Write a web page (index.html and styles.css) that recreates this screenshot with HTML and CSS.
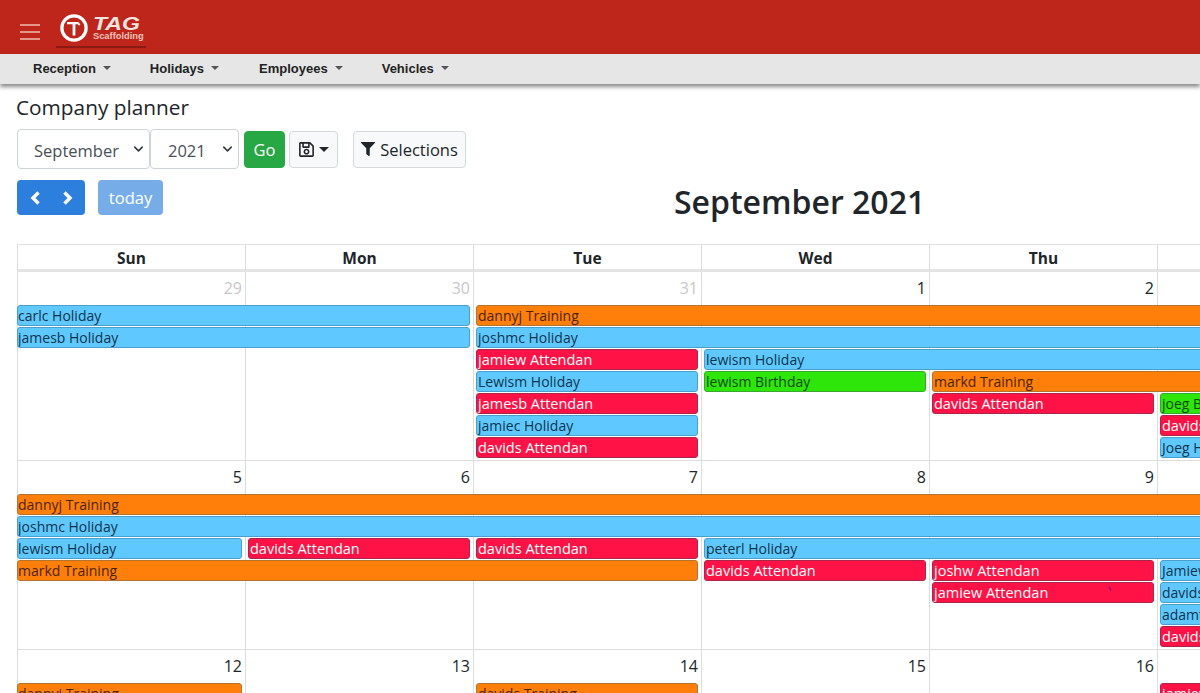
FILE: index.html
```html
<!DOCTYPE html>
<html lang="en">
<head>
<meta charset="utf-8">
<title>Company planner</title>
<link rel="stylesheet" href="styles.css">
</head>
<body>
<header class="topbar">
  <button class="burger" aria-label="Menu"><span></span><span></span><span></span></button>
  <div class="logo">
    <svg class="logo-mark" viewBox="0 0 30 30" width="28" height="28">
      <circle cx="15" cy="15" r="13" fill="none" stroke="#fff" stroke-width="3.500"/>
      <path d="M7.500 8.500h12.500v2.500h-3.500v12h-3V11h-6z" fill="#fff"/>
      <circle cx="20.500" cy="11" r="1.200" fill="#fff"/>
    </svg>
    <div class="logo-text"><span class="logo-tag">TAG</span><span class="logo-sub">Scaffolding</span></div>
  </div>
</header>
<nav class="menu">
  <a class="menu-item m1">Reception</a>
  <a class="menu-item m2">Holidays</a>
  <a class="menu-item m3">Employees</a>
  <a class="menu-item m4">Vehicles</a>
</nav>
<main class="page">
  <h1 class="heading">Company planner</h1>
  <div class="controls">
    <select class="pick pick-month"><option>September</option></select>
    <select class="pick pick-year"><option>2021</option></select>
    <button class="btn btn-go">Go</button>
    <button class="btn btn-light btn-save">
      <svg viewBox="0 0 448 512" width="15" height="17"><path d="M433.941 129.941l-83.882-83.882A48 48 0 0 0 316.118 32H48C21.49 32 0 53.49 0 80v352c0 26.51 21.49 48 48 48h352c26.51 0 48-21.49 48-48V163.882a48 48 0 0 0-14.059-33.941zM272 80v80H144V80h128zm122 352H54a6 6 0 0 1-6-6V86a6 6 0 0 1 6-6h42v104c0 13.255 10.745 24 24 24h176c13.255 0 24-10.745 24-24V83.882l78.243 78.243a6 6 0 0 1 1.757 4.243V426a6 6 0 0 1-6 6zM224 232c-48.523 0-88 39.477-88 88s39.477 88 88 88 88-39.477 88-88-39.477-88-88-88zm0 128c-22.056 0-40-17.944-40-40s17.944-40 40-40 40 17.944 40 40-17.944 40-40 40z" fill="#212529"/></svg>
      <span class="caret"></span>
    </button>
    <button class="btn btn-light btn-sel">
      <svg viewBox="0 0 512 512" width="14" height="14"><path d="M487.976 0H24.028C2.71 0-8.047 25.866 7.058 40.971L192 225.941V432c0 7.831 3.821 15.17 10.237 19.662l80 55.98C298.02 518.69 320 507.493 320 487.98V225.941l184.947-184.97C520.021 25.896 509.338 0 487.976 0z" fill="#212529"/></svg>
      Selections
    </button>
  </div>
  <div class="toolbar">
    <div class="arrows">
      <svg viewBox="0 0 12 16" width="12" height="16"><path d="M9.500 2.500L4 8l5.500 5.500" fill="none" stroke="#fff" stroke-width="3.400"/></svg>
      <svg viewBox="0 0 12 16" width="12" height="16"><path d="M2.500 2.500L8 8l-5.500 5.500" fill="none" stroke="#fff" stroke-width="3.400"/></svg>
    </div>
    <button class="today">today</button>
    <h2 class="title">September 2021</h2>
  </div>
  <div class="calendar">
    <div class="head">
      <div>Sun</div><div>Mon</div><div>Tue</div><div>Wed</div><div>Thu</div><div>Fri</div><div>Sat</div>
    </div>

    <div class="week">
      <div class="day d1 other">29</div><div class="day d2 other">30</div><div class="day d3 other">31</div><div class="day d4">1</div><div class="day d5">2</div><div class="day d6">3</div><div class="day d7">4</div>
      <div class="ev blue r1 c1 s2">carlc Holiday</div>
      <div class="ev orange r1 c3 s5">dannyj Training</div>
      <div class="ev blue r2 c1 s2">jamesb Holiday</div>
      <div class="ev blue r2 c3 s5">joshmc Holiday</div>
      <div class="ev red r3 c3 s1">jamiew Attendan</div>
      <div class="ev blue r3 c4 s4">lewism Holiday</div>
      <div class="ev blue r4 c3 s1">Lewism Holiday</div>
      <div class="ev green r4 c4 s1">lewism Birthday</div>
      <div class="ev orange r4 c5 s3">markd Training</div>
      <div class="ev red r5 c3 s1">jamesb Attendan</div>
      <div class="ev red r5 c5 s1">davids Attendan</div>
      <div class="ev green r5 c6 s1">joeg Birthday</div>
      <div class="ev blue r6 c3 s1">jamiec Holiday</div>
      <div class="ev red r6 c6 s1">davids Attendan</div>
      <div class="ev red r7 c3 s1">davids Attendan</div>
      <div class="ev blue r7 c6 s1">Joeg Holiday</div>
    </div>

    <div class="week">
      <div class="day d1">5</div><div class="day d2">6</div><div class="day d3">7</div><div class="day d4">8</div><div class="day d5">9</div><div class="day d6">10</div><div class="day d7">11</div>
      <div class="ev orange r1 c1 s7">dannyj Training</div>
      <div class="ev blue r2 c1 s7">joshmc Holiday</div>
      <div class="ev blue r3 c1 s1">lewism Holiday</div>
      <div class="ev red r3 c2 s1">davids Attendan</div>
      <div class="ev red r3 c3 s1">davids Attendan</div>
      <div class="ev blue r3 c4 s4">peterl Holiday</div>
      <div class="ev orange r4 c1 s3">markd Training</div>
      <div class="ev red r4 c4 s1">davids Attendan</div>
      <div class="ev red r4 c5 s1">joshw Attendan</div>
      <div class="ev blue r4 c6 s1">Jamiew Holiday</div>
      <div class="ev red r5 c5 s1">jamiew Attendan
        <svg class="cursor-mark" viewBox="0 0 4 6" width="4" height="6"><path d="M0.500 0L3.500 5.500 2 5z" fill="#3a0fb0"/></svg>
      </div>
      <div class="ev blue r5 c6 s1">davids Holiday</div>
      <div class="ev blue r6 c6 s1">adamt Holiday</div>
      <div class="ev red r7 c6 s1">davids Attendan</div>
    </div>

    <div class="week">
      <div class="day d1">12</div><div class="day d2">13</div><div class="day d3">14</div><div class="day d4">15</div><div class="day d5">16</div><div class="day d6">17</div><div class="day d7">18</div>
      <div class="ev orange r1 c1 s1">dannyj Training</div>
      <div class="ev orange r1 c3 s1">davids Training</div>
      <div class="ev red r1 c6 s1">jamiew Attendan</div>
    </div>
  </div>
</main>
</body>
</html>
```
FILE: styles.css
```css
* { box-sizing: border-box; }
html, body { margin: 0; padding: 0; height: 693px; overflow: hidden; background: #fff; }
body { font-family: "Open Sans", "Noto Sans", sans-serif; color: #212529; width: 1200px; }

.topbar { height: 54px; background: #bf261b; display: flex; align-items: flex-start; }
.burger { width: 20px; margin: 24px 0 0 20px; padding: 0; border: 0; background: none; display: flex; flex-direction: column; gap: 5px; }
.burger span { display: block; height: 2px; background: #e5968a; }
.logo { display: flex; margin: 14px 0 0 16px; padding-left: 4px; width: 90px; height: 34px; border-bottom: 2px solid #8a1a12; }
.logo-mark { flex: none; }
.logo-text { display: flex; flex-direction: column; margin-left: 5px; }
.logo-tag { font: italic 700 18px/16px "Liberation Sans", sans-serif; color: #f6e6e2; height: 15px; margin-top: 2px; transform: scaleX(1.28); transform-origin: left center; }
.logo-sub { font: 700 9.300px/11px "Liberation Sans", sans-serif; color: #f2c3bb; }

.menu { height: 30px; padding-bottom: 2px; background: #e6e6e6; box-shadow: 0 3px 4px rgba(0,0,0,.45); position: relative; display: flex; align-items: center; font: 700 13px "Liberation Sans", sans-serif; color: #222; }
.menu-item { display: flex; align-items: center; gap: 7px; }
.menu-item::after { content: ""; border: 4px solid transparent; border-top-color: #555; border-bottom: 0; }
.m1 { margin-left: 33px; }
.m2 { margin-left: 39px; }
.m3 { margin-left: 40px; }
.m4 { margin-left: 39px; }

.page { padding: 0 0 0 17px; }
.heading { font-size: 20.800px; font-weight: 500; line-height: 28px; margin: 9px 0 8px -1px; color: #212529; }

.controls { display: flex; align-items: center; height: 40px; }
.pick { appearance: none; height: 40px; border: 1px solid #ced4da; border-radius: 4px; background: #fff url("data:image/svg+xml,%3Csvg xmlns='http://www.w3.org/2000/svg' viewBox='0 0 16 16'%3E%3Cpath fill='none' stroke='%23343a40' stroke-linecap='round' stroke-linejoin='round' stroke-width='2.500' d='M2 5l6 6 6-6'/%3E%3C/svg%3E") no-repeat right 5px center / 11px 10px; font: 16.500px "Open Sans", sans-serif; color: #495057; padding-top: 2px; }
.pick-month { width: 133px; padding-left: 16px; }
.pick-year { width: 89px; padding-left: 17px; }
.btn { height: 37px; border-radius: 4px; font: 16.500px "Open Sans", sans-serif; padding: 0; display: flex; align-items: center; justify-content: center; }
.btn-go { width: 41px; margin-left: 5px; background: #28a745; border: 1px solid #28a745; color: #fff; }
.btn-light { background: #f8f9fa; border: 1px solid #d6d9dc; color: #212529; }
.btn-save { width: 49px; margin-left: 4px; gap: 5px; }
.caret { border: 5px solid transparent; border-top-color: #212529; border-bottom: 0; }
.btn-sel { width: 113px; margin-left: 15px; gap: 5px; }

.toolbar { display: flex; align-items: flex-start; margin-top: 11px; height: 64px; }
.arrows { width: 68px; height: 35px; background: #2c7fdc; border-radius: 4px; display: flex; align-items: center; justify-content: center; gap: 21px; }
.today { width: 65px; height: 35px; margin-left: 13px; border: 0; border-radius: 4px; background: #76ade9; color: #fff; font: 16.500px "Open Sans", sans-serif; padding: 0; }
.title { font-size: 32px; font-weight: 600; line-height: 44px; margin: 0 0 0 511px; white-space: nowrap; color: #212529; }

.calendar { width: 1596px; border-top: 1px solid #e2e2e2; }
.head { display: grid; grid-template-columns: repeat(7, 228px); height: 27px; border-bottom: 3px solid #e4e4e4; }
.head div { border-left: 1px solid #ddd; text-align: center; font-weight: 700; font-size: 15.500px; line-height: 26px; color: #212529; }

.week { display: grid; grid-template-columns: repeat(7, 228px); grid-template-rows: 32px repeat(7, 21px); row-gap: 1px; height: 189px; border-bottom: 1px solid #ddd; font-size: 14px; }
.day { grid-row: 1 / -1; margin-bottom: -20px; border-left: 1px solid #ddd; text-align: right; padding: 5px 3px 0 0; font-size: 16px; line-height: 22px; color: #212529; }
.other { color: #c8c8c8; }
.d1 { grid-column: 1; } .d2 { grid-column: 2; } .d3 { grid-column: 3; } .d4 { grid-column: 4; } .d5 { grid-column: 5; } .d6 { grid-column: 6; } .d7 { grid-column: 7; }

.ev { position: relative; margin: 0 3px; padding-left: 1px; border: 1px solid; border-radius: 3px; line-height: 19px; white-space: nowrap; overflow: hidden; }
.blue { background: #5fc9ff; border-color: #4a9fcc; color: #10344a; }
.orange { background: #ff7f0a; border-color: #b3752e; color: #4a2400; }
.red { background: #ff1245; border-color: #a8274a; color: #fff; font-size: 14.500px; }
.green { background: #2fe60a; border-color: #3aa82c; color: #124a08; }

.r1 { grid-row: 2; } .r2 { grid-row: 3; } .r3 { grid-row: 4; } .r4 { grid-row: 5; } .r5 { grid-row: 6; } .r6 { grid-row: 7; } .r7 { grid-row: 8; }
.c1 { grid-column-start: 1; margin-left: 0; padding-left: 0; } .c2 { grid-column-start: 2; } .c3 { grid-column-start: 3; } .c4 { grid-column-start: 4; } .c5 { grid-column-start: 5; } .c6 { grid-column-start: 6; }
.s1 { grid-column-end: span 1; } .s2 { grid-column-end: span 2; } .s3 { grid-column-end: span 3; } .s4 { grid-column-end: span 4; } .s5 { grid-column-end: span 5; } .s7 { grid-column-end: span 7; }
.cursor-mark { position: absolute; left: 175px; top: 2px; }
```
